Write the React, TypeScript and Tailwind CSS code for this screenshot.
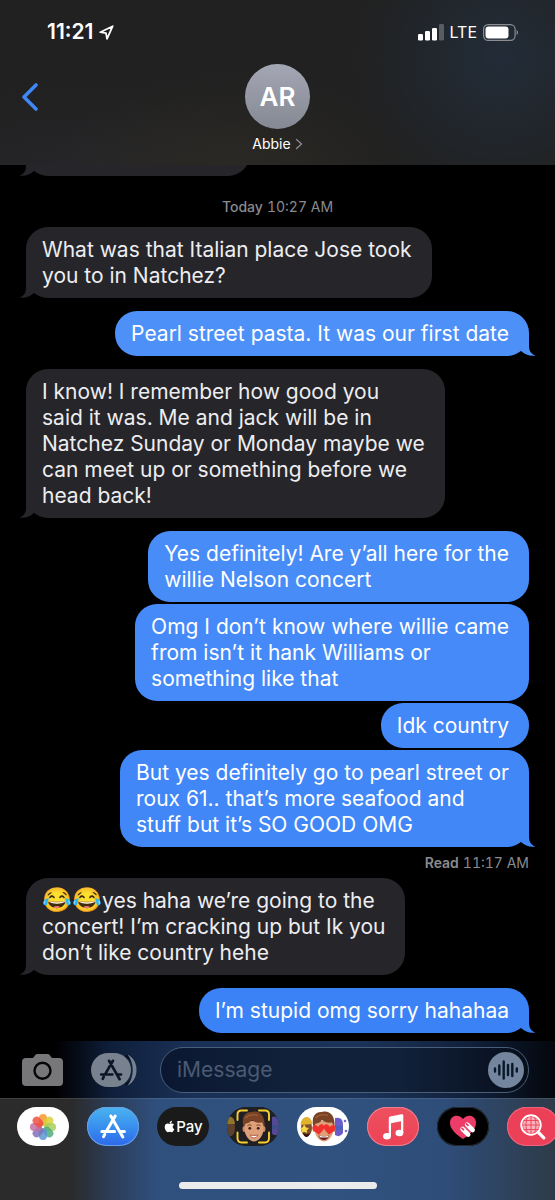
import { FaApple } from "react-icons/fa";

type Message = {
  from: "me" | "abbie";
  lines: string[];
  emoji?: string;
  tail?: boolean;
  color?: string;
  gap?: string;
  meta?: string;
};

const messages: Message[] = [
  {
    from: "me",
    lines: ["Pearl street pasta. It was our first date"],
    tail: true,
    color: "bg-[#4d90f8] text-[#4d90f8]",
    gap: "mt-[13px]",
  },
  {
    from: "abbie",
    lines: [
      "I know! I remember how good you",
      "said it was. Me and jack will be in",
      "Natchez Sunday or Monday maybe we",
      "can meet up or something before we",
      "head back!",
    ],
    tail: true,
    gap: "mt-[13px]",
  },
  {
    from: "me",
    lines: ["Yes definitely! Are y’all here for the", "willie Nelson concert"],
    color: "bg-[#488cf8] text-[#488cf8]",
    gap: "mt-[13px]",
  },
  {
    from: "me",
    lines: ["Omg I don’t know where willie came", "from isn’t it hank Williams or", "something like that"],
    color: "bg-[#458af8] text-[#458af8]",
    gap: "mt-0.5",
  },
  {
    from: "me",
    lines: ["Idk country"],
    color: "bg-[#4388f8] text-[#4388f8]",
    gap: "mt-0.5",
  },
  {
    from: "me",
    lines: ["But yes definitely go to pearl street or", "roux 61.. that’s more seafood and", "stuff but it’s SO GOOD OMG"],
    tail: true,
    color: "bg-[#4187f8] text-[#4187f8]",
    gap: "mt-0.5",
    meta: "11:17 AM",
  },
  {
    from: "abbie",
    emoji: "😂😂",
    lines: ["yes haha we’re going to the", "concert! I’m cracking up but Ik you", "don’t like country hehe"],
    tail: true,
  },
  {
    from: "me",
    lines: ["I’m stupid omg sorry hahahaa"],
    tail: true,
    color: "bg-[#3b82f7] text-[#3b82f7]",
    gap: "mt-[13px]",
  },
];

function Bubble({ message }: { message: Message }) {
  const mine = message.from === "me";
  return (
    <div
      className={`relative w-fit shrink-0 rounded-[22px] pt-2.5 pb-[9px] pl-4 pr-5 ${mine ? "self-end" : "self-start"} ${
        message.color ?? "bg-[#26252a] text-[#26252a]"
      } ${message.gap ?? ""}`}
    >
      {message.tail && (
        <svg
          viewBox="0 0 22 22"
          className={`absolute bottom-0 size-[22px] ${mine ? "-right-[7px]" : "-left-[7px] -scale-x-100"}`}
          fill="currentColor"
          aria-hidden="true"
        >
          <path d="M15 0V12C15 17 17.5 20.5 21.5 21.5C16.5 22.5 11 20.8 7 17L4 0Z" />
        </svg>
      )}
      <p className={`relative text-[21px] leading-[26px] whitespace-nowrap ${mine ? "text-white" : "text-[#ededf0]"}`}>
        {message.lines.map((line, i) => (
          <span key={line} className="block h-[26px]">
            {i === 0 && message.emoji && <span className="text-2xl leading-5">{message.emoji}</span>}
            {line}
          </span>
        ))}
      </p>
    </div>
  );
}

function StatusBar() {
  return (
    <div className="flex h-16 items-center justify-between pl-[47px] pr-9">
      <div className="flex items-center gap-1.5">
        <span className="text-[21px] leading-6 font-semibold">11:21</span>
        <svg viewBox="0 0 15 15" className="size-[15px]" fill="none" stroke="currentColor" strokeWidth="1.8" strokeLinejoin="round">
          <path d="M1.2 7.2L13.7 1.2L8 13.8L7 8.2Z" />
        </svg>
      </div>
      <div className="flex items-center gap-1.5">
        <svg viewBox="0 0 26 17" className="h-[17px] w-[26px]" fill="currentColor">
          <rect x="0" y="10" width="5" height="6.5" rx="1.3" />
          <rect x="7" y="7" width="5" height="9.5" rx="1.3" />
          <rect x="14" y="4" width="5" height="12.5" rx="1.3" />
          <rect x="21" y="0" width="5" height="16.5" rx="1.3" opacity="0.25" />
        </svg>
        <span className="text-base leading-6">LTE</span>
        <svg viewBox="0 0 36 17" className="h-[17px] w-9" fill="none">
          <rect x="0.6" y="0.6" width="31.5" height="15.8" rx="4.6" stroke="#8b8d92" strokeWidth="1.2" />
          <rect x="2.5" y="2.5" width="23" height="12" rx="3" fill="#fff" />
          <path d="M33.6 6V11C35.5 10.2 35.5 6.8 33.6 6Z" fill="#8b8d92" />
        </svg>
      </div>
    </div>
  );
}

function Header() {
  return (
    <header className="shrink-0 bg-[#212121] bg-[radial-gradient(circle_at_90%_35%,#222c38_0,transparent_28%),radial-gradient(ellipse_at_42%_105%,#2b2924_0,transparent_40%),radial-gradient(ellipse_at_15%_105%,#26262a_0,transparent_35%)] pb-1.5">
      <StatusBar />
      <div className="grid grid-cols-[1fr_auto_1fr] items-start">
        <button aria-label="Back" className="ml-5 flex h-[65px] w-6 items-center">
          <svg viewBox="0 0 20 30" className="h-[30px] w-5" fill="none" stroke="#3f87f5" strokeWidth="3.6" strokeLinecap="round" strokeLinejoin="round">
            <path d="M16 3L4 15L16 27" />
          </svg>
        </button>
        <button className="flex flex-col items-center">
          <span className="flex size-[65px] items-center justify-center rounded-full bg-linear-to-b from-[#a4a7b4] to-[#858993] text-[26px] leading-8 font-semibold">
            AR
          </span>
          <span className="flex h-[30px] items-center gap-1 text-sm">
            Abbie
            <svg viewBox="0 0 8 12" className="h-3 w-2" fill="none" stroke="#8b8b90" strokeWidth="1.3" strokeLinecap="round">
              <path d="M1.5 1.5L6.5 6L1.5 10.5" />
            </svg>
          </span>
        </button>
      </div>
    </header>
  );
}

function AppStoreMark({ className }: { className: string }) {
  return (
    <svg viewBox="0 0 26 25" className={className} fill="none" stroke="currentColor" strokeWidth="3" strokeLinecap="round">
      <path d="M15.2 2L6.4 17.2M10.8 2L22.8 23M4.7 20.4L3.6 22.6M1.8 17.6H14.6M19.6 17.6H24.4" />
    </svg>
  );
}

function ComposeBar() {
  return (
    <div className="flex h-[57px] items-center bg-[linear-gradient(to_right,#000_10%,#0f1f3b_20%,#1a3157_35%,#1b3358_65%,#10203a_85%,#04070c)] pl-[22px] pr-[26px]">
      <button aria-label="Camera">
        <svg viewBox="0 0 41 32" className="h-8 w-[41px]">
          <path
            fill="#77777a"
            d="M4 4H10.5C12 4 13 0 15 0H26C28 0 29 4 30.5 4H37Q41 4 41 8V28Q41 32 37 32H4Q0 32 0 28V8Q0 4 4 4Z"
          />
          <circle cx="20.5" cy="16.8" r="8" fill="none" stroke="#050505" strokeWidth="2.4" />
        </svg>
      </button>
      <button aria-label="Apps" className="relative ml-7 flex h-[34px] w-[46px] items-center">
        <svg viewBox="0 0 46 34" className="h-[34px] w-[46px]" fill="none">
          <rect width="40" height="34" rx="17" fill="#78828f" />
          <path d="M34.5 2.5C47 8 47 26 34.5 31.5" stroke="#081222" strokeWidth="2.5" />
          <path d="M36.5 1.6C48.5 7 48.5 27 36.5 32.4C43.5 24 43.5 10 36.5 1.6Z" fill="#78828f" />
        </svg>
        <span className="absolute inset-y-0 left-2 flex items-center text-[#0b1626]">
          <AppStoreMark className="h-[22px] w-6" />
        </span>
      </button>
      <div className="ml-[23px] flex h-[46px] min-w-0 flex-1 items-center rounded-full border border-[#4a5d79] bg-[linear-gradient(to_right,#0b1730,#11213a_35%,#11213a_65%,#070e1b)] pl-4 pr-1">
        <input
          type="text"
          aria-label="iMessage"
          placeholder="iMessage"
          className="min-w-0 flex-1 bg-transparent text-[21px] leading-7 text-white outline-none placeholder:text-[#4a5a72]"
        />
        <button aria-label="Record audio" className="flex size-9 items-center justify-center rounded-full bg-[#74869d]">
          <svg viewBox="0 0 26 22" className="h-[22px] w-[26px]" stroke="#0b182b" strokeWidth="2.4" strokeLinecap="round">
            <path d="M2 9.5V12.5M6.3 6.5V15.5M10.7 2.5V19.5M15 6V16M19.3 5V17M23.8 9.5V12.5" />
          </svg>
        </button>
      </div>
    </div>
  );
}

const petals = [
  { angle: 0, color: "#f79a2b" },
  { angle: 45, color: "#d9cf3a" },
  { angle: 90, color: "#a8cf5a" },
  { angle: 135, color: "#4fae7c" },
  { angle: 180, color: "#5c97d4" },
  { angle: 225, color: "#7f70b8" },
  { angle: 270, color: "#c46fa3" },
  { angle: 315, color: "#ef5040" },
];

function PhotosIcon() {
  return (
    <svg viewBox="0 0 26 26" className="size-[26px]">
      {petals.map((petal) => (
        <rect
          key={petal.angle}
          x="9"
          y="0"
          width="8"
          height="11.8"
          rx="4"
          fill={petal.color}
          fillOpacity="0.85"
          transform={`rotate(${petal.angle} 13 13)`}
        />
      ))}
    </svg>
  );
}

function MemojiFace() {
  return (
    <>
      <ellipse cx="17.3" cy="22" rx="1.8" ry="3" fill="#c98660" />
      <ellipse cx="36.7" cy="22" rx="1.8" ry="3" fill="#c98660" />
      <path d="M17.5 14H36.5V22C36.5 29 31 34.5 27 34.5C23 34.5 17.5 29 17.5 22Z" fill="#dea079" />
      <path d="M16.5 20C14 10 18 4.5 25 5C32 3 38.5 8 37.5 20L35 15.5C31 16 27 15 25 13C23.5 15.5 20.5 16.5 18.8 16.5Z" fill="#7a4326" />
      <path d="M18.5 11C22 7.5 26 7 31 8.5" stroke="#a0653c" strokeWidth="1.2" fill="none" />
    </>
  );
}

function MemojiCameraIcon() {
  return (
    <svg viewBox="0 0 52 39" className="h-[39px] w-[52px]" fill="none">
      <rect width="52" height="39" fill="#202024" />
      <g opacity="0.7">
        <ellipse cx="3" cy="21" rx="5" ry="8.5" fill="#7d5030" />
        <path d="M-2 17C-1 8 7 7 8 17Z" fill="#c29a2b" />
        <path d="M45 10Q50 8 52 14V28Q49 29 45 27Z" fill="#6a5cc8" />
        <path d="M45 18H52V22H45Z" fill="#4a63b8" />
      </g>
      <MemojiFace />
      <path d="M20.5 18.5Q22.5 17.3 24.5 18.3M29.5 18.3Q31.5 17.3 33.5 18.5" stroke="#6b3a20" strokeWidth="0.9" />
      <circle cx="22.8" cy="21.3" r="1.4" fill="#3d2015" />
      <circle cx="31.2" cy="21.3" r="1.4" fill="#3d2015" />
      <path d="M23 28Q27 29 31 28Q29.8 31 27 31Q24.2 31 23 28Z" fill="#fff" stroke="#a94b3f" strokeWidth="0.8" />
      <path
        d="M20 3.5H14.5Q10.5 3.5 10.5 7.5V13M32 3.5H38Q42 3.5 42 7.5V13M10.5 25.5V31Q10.5 35.5 14.5 35.5H20M42 25.5V31Q42 35.5 38 35.5H32"
        stroke="#f6cf2f"
        strokeWidth="1.9"
        strokeLinecap="round"
      />
    </svg>
  );
}

const heart = "M0 2.5C-2.5-3-9 0-5.8 5.5C-4 8-1.5 9.5 0 11C1.5 9.5 4 8 5.8 5.5C9 0 2.5-3 0 2.5Z";

function MemojiStickersIcon() {
  return (
    <svg viewBox="0 0 52 39" className="h-[39px] w-[52px]" fill="none">
      <ellipse cx="9.5" cy="21" rx="5.5" ry="8.5" fill="#7d5030" />
      <path d="M3.5 18C4 8 14 7 15.5 17Z" fill="#e0b22e" />
      <path d="M38 11Q46 9 46 18V26Q43 31 38 28Z" fill="#6a5cc8" />
      <path d="M38 19H46V23H38Z" fill="#4a63b8" />
      <circle cx="48" cy="14" r="1.3" fill="#7d63d8" />
      <circle cx="49" cy="24" r="1.3" fill="#7d63d8" />
      <path d="M5.5 20.5L7.2 17.5L9 20.5L12 21L9.8 23.2L10 26L7.2 24.8L4.6 26L5 23.2L3 21Z" fill="#f8d64a" />
      <path d="M6 26Q10 28 13 26Q12 30 9.5 30Q7 30 6 26Z" fill="#3b1712" />
      <MemojiFace />
      <path d={heart} fill="#f0312d" transform="translate(21 18) rotate(-6) scale(.88)" />
      <path d={heart} fill="#f0312d" transform="translate(33 18) rotate(6) scale(.88)" />
      <path d="M21.5 28.5Q27 30 32 28.5Q30.5 33 27 33Q23 33 21.5 28.5Z" fill="#6b1d1a" />
      <path d="M22.3 28.8Q27 30 31.5 28.8L30.8 30.2Q27 31 23 30.2Z" fill="#fff" />
    </svg>
  );
}

function MusicIcon() {
  return (
    <svg viewBox="0 0 21 26" className="h-[26px] w-[21px]" fill="currentColor">
      <ellipse cx="4" cy="22.2" rx="3.9" ry="3.2" />
      <ellipse cx="16.4" cy="19" rx="3.9" ry="3.2" />
      <path d="M5.8 22V4.2Q5.8 2.8 7.2 2.5L18.6 0.3Q20.3 0 20.3 1.6V19H18V7.2L8 9.2V22Z" />
    </svg>
  );
}

function DigitalTouchIcon() {
  return (
    <svg viewBox="0 0 26 24" className="h-6 w-[26px]">
      <path d="M13 4C10-1 0-1 0 8C0 14.5 7 20 13 24C19 20 26 14.5 26 8C26-1 16-1 13 4Z" fill="#ee3c68" />
      <path d="M12.6 14L18.2 19.6M17.2 9.6L22.6 15" stroke="#fff" strokeWidth="4.6" strokeLinecap="round" />
      <path d="M12 13.3L13.4 14.7M16.6 9L18 10.4" stroke="#ee3c68" strokeWidth="1.8" strokeLinecap="round" />
    </svg>
  );
}

function ImagesIcon() {
  return (
    <svg viewBox="0 0 26 26" className="size-[26px]" fill="none" stroke="currentColor">
      <circle cx="11" cy="11" r="9.7" strokeWidth="2" />
      <circle cx="11" cy="11" r="8" fill="#fff" fillOpacity="0.6" stroke="none" />
      <path
        d="M11 2.5V19.5M2.5 11H19.5M3.5 6.5H18.5M3.5 15.5H18.5M7.5 3C5.5 8 5.5 14 7.5 19M14.5 3C16.5 8 16.5 14 14.5 19"
        stroke="#ec4058"
        strokeWidth="0.9"
      />
      <path d="M18.5 18.5L23.8 23.8" strokeWidth="3.2" strokeLinecap="round" />
    </svg>
  );
}

const apps = [
  { name: "Photos", tone: "bg-white", icon: <PhotosIcon /> },
  {
    name: "App Store",
    tone: "bg-linear-to-b from-[#4bb4f0] to-[#2f68ea] ring-1 ring-inset ring-[#6a9fe0]",
    icon: <AppStoreMark className="h-[25px] w-[26px]" />,
  },
  {
    name: "Apple Pay",
    tone: "bg-[#1a1a1a]",
    icon: (
      <span className="flex items-center text-[15px] leading-5 font-medium">
        <FaApple size={13} />
        Pay
      </span>
    ),
  },
  { name: "Memoji camera", tone: "bg-[#202024]", icon: <MemojiCameraIcon /> },
  { name: "Memoji stickers", tone: "bg-white", icon: <MemojiStickersIcon /> },
  { name: "Music", tone: "bg-linear-to-b from-[#ee5060] to-[#ec4256] ring-1 ring-inset ring-[#e8808f]", icon: <MusicIcon /> },
  { name: "Digital Touch", tone: "bg-black ring-1 ring-inset ring-[#262a30]", icon: <DigitalTouchIcon /> },
  { name: "#images", tone: "bg-[#ec4058] ring-1 ring-inset ring-[#e8667c]", icon: <ImagesIcon /> },
];

function AppStrip() {
  return (
    <div className="bg-[linear-gradient(to_right,#2b2b2c_13%,#2c3d58_20%,#2f4f7c_28%,#31527f_60%,#2e4d79_80%,#2e3b49)]">
      <nav className="flex gap-[18px] overflow-hidden border-t border-white/10 pt-2 pl-[17px]">
        {apps.map((app) => (
          <button
            key={app.name}
            aria-label={app.name}
            className={`flex h-[39px] w-[52px] shrink-0 items-center justify-center overflow-hidden rounded-full ${app.tone}`}
          >
            {app.icon}
          </button>
        ))}
      </nav>
      <div className="flex justify-center pt-9 pb-[11px]">
        <div className="h-[7px] w-[198px] rounded-full bg-[#ebebeb]" />
      </div>
    </div>
  );
}

export default function App() {
  return (
    <div className="flex h-screen flex-col bg-black font-['Inter','Liberation_Sans',sans-serif] text-white">
      <Header />
      <main className="flex min-h-0 flex-1 flex-col justify-end overflow-hidden px-[26px] pb-2">
        <Bubble message={{ from: "abbie", lines: ["I know, haha! 😂😂"], tail: true }} />
        <p className="flex h-[51px] shrink-0 items-center justify-center gap-1 pt-2.5 text-sm text-[#8a8a8f] tabular-nums">
          <span className="font-medium">Today</span> 10:27 AM
        </p>
        <Bubble
          message={{
            from: "abbie",
            lines: ["What was that Italian place Jose took", "you to in Natchez?"],
            tail: true,
          }}
        />
        {messages.map((message) => (
          <div key={message.lines[0]} className="flex shrink-0 flex-col">
            <Bubble message={message} />
            {message.meta && (
              <p className="flex h-[31px] items-center justify-end gap-1 text-sm text-[#8a8a8f] tabular-nums">
                <span className="font-semibold">Read</span> {message.meta}
              </p>
            )}
          </div>
        ))}
      </main>
      <footer className="shrink-0">
        <ComposeBar />
        <AppStrip />
      </footer>
    </div>
  );
}
